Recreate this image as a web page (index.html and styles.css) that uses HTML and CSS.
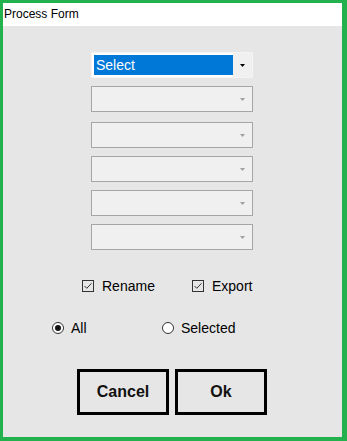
FILE: index.html
```html
<!DOCTYPE html>
<html lang="en">
  <head>
    <meta charset="UTF-8" />
    <title>Process Form</title>
    <link rel="stylesheet" href="styles.css">
  </head>
  <body>
    <div class="window">
      <div class="titlebar">Process Form</div>

      <div class="content">
        <div class="combos">
          <div class="combo active">
            <span class="combo-value">Select</span>
            <span class="combo-btn">
              <svg width="6" height="3" viewBox="0 0 6 3"><path d="M0 0h5L2.5 3z" fill="#000"/></svg>
            </span>
          </div>
          <div class="combo disabled gap-after">
            <span class="combo-value"></span>
            <span class="combo-btn">
              <svg width="6" height="3" viewBox="0 0 6 3"><path d="M0 0h5L2.5 3z" fill="#a0a0a0"/></svg>
            </span>
          </div>
          <div class="combo disabled">
            <span class="combo-value"></span>
            <span class="combo-btn">
              <svg width="6" height="3" viewBox="0 0 6 3"><path d="M0 0h5L2.5 3z" fill="#a0a0a0"/></svg>
            </span>
          </div>
          <div class="combo disabled">
            <span class="combo-value"></span>
            <span class="combo-btn">
              <svg width="6" height="3" viewBox="0 0 6 3"><path d="M0 0h5L2.5 3z" fill="#a0a0a0"/></svg>
            </span>
          </div>
          <div class="combo disabled">
            <span class="combo-value"></span>
            <span class="combo-btn">
              <svg width="6" height="3" viewBox="0 0 6 3"><path d="M0 0h5L2.5 3z" fill="#a0a0a0"/></svg>
            </span>
          </div>
          <div class="combo disabled">
            <span class="combo-value"></span>
            <span class="combo-btn">
              <svg width="6" height="3" viewBox="0 0 6 3"><path d="M0 0h5L2.5 3z" fill="#a0a0a0"/></svg>
            </span>
          </div>
        </div>

        <div class="option-row checks">
          <label class="option">
            <svg class="box" width="12" height="12" viewBox="0 0 12 12">
              <rect x="0.5" y="0.5" width="11" height="11" fill="none" stroke="#333"/>
              <path d="M2.5 6l2.3 2.3 4.7-5" fill="none" stroke="#333" stroke-width="1"/>
            </svg>
            <span>Rename</span>
          </label>
          <label class="option">
            <svg class="box" width="12" height="12" viewBox="0 0 12 12">
              <rect x="0.5" y="0.5" width="11" height="11" fill="none" stroke="#333"/>
              <path d="M2.5 6l2.3 2.3 4.7-5" fill="none" stroke="#333" stroke-width="1"/>
            </svg>
            <span>Export</span>
          </label>
        </div>

        <div class="option-row radios">
          <label class="option">
            <svg class="radio" width="12" height="12" viewBox="0 0 12 12">
              <circle cx="6" cy="6" r="5.5" fill="#fff" stroke="#333"/>
              <circle cx="6" cy="6" r="3" fill="#111"/>
            </svg>
            <span>All</span>
          </label>
          <label class="option">
            <svg class="radio" width="12" height="12" viewBox="0 0 12 12">
              <circle cx="6" cy="6" r="5.5" fill="#fff" stroke="#333"/>
            </svg>
            <span>Selected</span>
          </label>
        </div>

        <div class="buttons">
          <button type="button">Cancel</button>
          <button type="button">Ok</button>
        </div>
      </div>
    </div>
  </body>
</html>
```

FILE: styles.css
```css
html,
body {
  margin: 0;
  padding: 0;
}
body {
  font-family: "Liberation Sans", Arial, sans-serif;
  background-color: #22b14c;
}
.window {
  box-sizing: border-box;
  width: 347px;
  height: 441px;
  border-style: solid;
  border-color: #22b14c;
  border-width: 3px 5px 4px 3px;
  display: flex;
  flex-direction: column;
}
.titlebar {
  height: 23px;
  line-height: 22px;
  background: white;
  color: #000;
  font-size: 12px;
  padding-left: 1px;
}
.content {
  flex: 1;
  background-color: #e6e6e6;
  padding: 26px 1px 0 0;
}
.combos {
  display: flex;
  flex-direction: column;
  align-items: center;
  gap: 8px;
}
.combo {
  box-sizing: border-box;
  width: 162px;
  height: 26px;
  display: flex;
  align-items: stretch;
}
.combo.active {
  background: white;
  border: 1px solid #f4f4f4;
  padding: 2px 0 2px 2px;
}
.combo.active .combo-value {
  background-color: #0078d7;
  color: white;
  font-size: 14px;
  line-height: 20px;
  padding-left: 2px;
}
.combo.disabled {
  background-color: #f0f0f0;
  border: 1px solid #a6a6a6;
}
.combo.gap-after {
  margin-bottom: 2px;
}
.combo-value {
  flex: 1;
}
.combo-btn {
  width: 19px;
  display: flex;
  align-items: center;
  justify-content: center;
  background-color: #f0f0f0;
}
.combo.active .combo-btn {
  margin: -2px 0;
}
.option-row {
  display: flex;
  height: 20px;
  align-items: center;
  font-size: 14px;
  color: #000;
}
.checks {
  margin-top: 26px;
  padding-left: 79px;
}
.radios {
  margin-top: 22px;
  padding-left: 49px;
}
.option {
  width: 110px;
  display: flex;
  align-items: center;
}
.checks .option span {
  margin-left: 8px;
}
.radios .option span {
  margin-left: 7px;
}
.buttons {
  display: flex;
  justify-content: center;
  gap: 6px;
  margin-top: 31px;
}
button {
  box-sizing: border-box;
  width: 92px;
  height: 46px;
  border: 3px solid #000;
  background-color: #e6e6e6;
  font-family: "Liberation Sans", Arial, sans-serif;
  font-weight: bold;
  font-size: 16px;
  color: #111;
  padding: 0;
  border-radius: 0;
}
```
